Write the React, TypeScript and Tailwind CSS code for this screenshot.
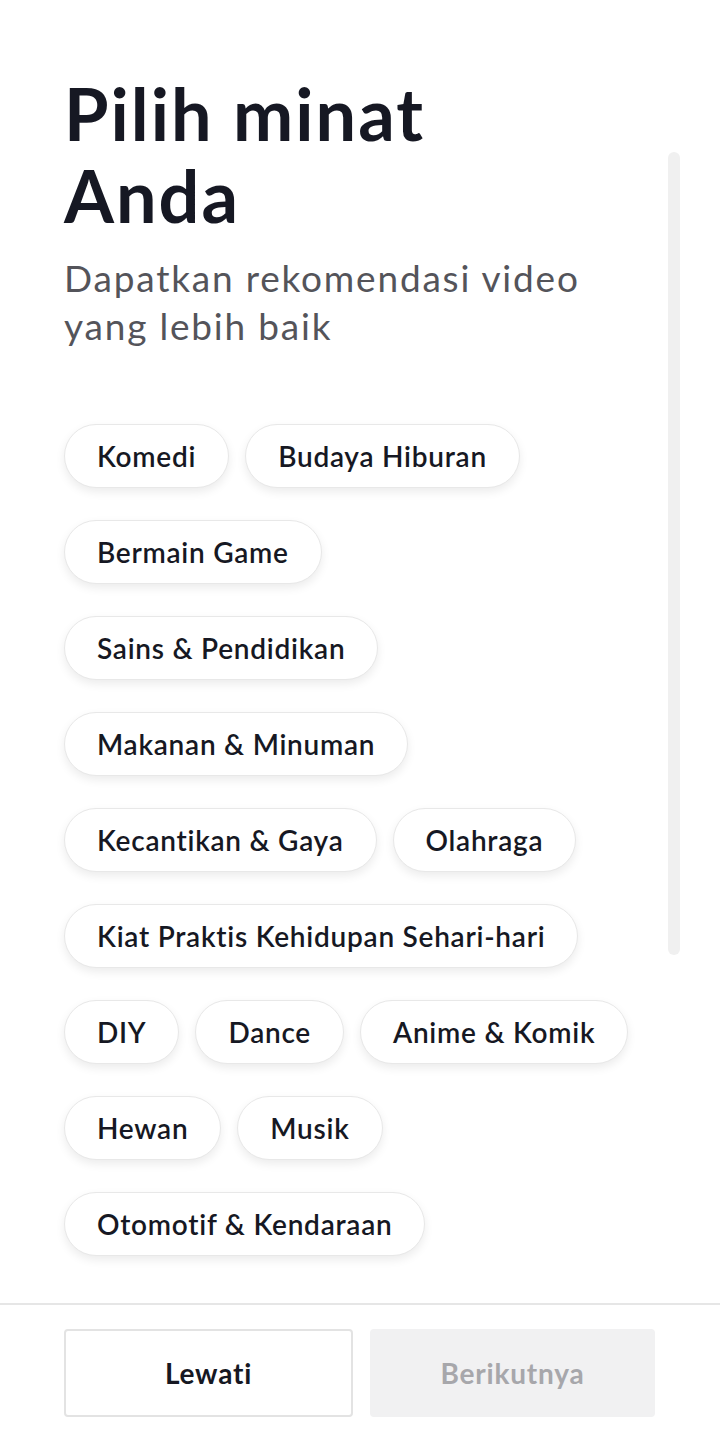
const INTERESTS: string[][] = [
  ['Komedi', 'Budaya Hiburan'],
  ['Bermain Game'],
  ['Sains & Pendidikan'],
  ['Makanan & Minuman'],
  ['Kecantikan & Gaya', 'Olahraga'],
  ['Kiat Praktis Kehidupan Sehari-hari'],
  ['DIY', 'Dance', 'Anime & Komik'],
  ['Hewan', 'Musik'],
  ['Otomotif & Kendaraan'],
];

export default function App() {
  return (
    <div className="relative flex h-[1440px] w-[720px] flex-col bg-white text-[#161823]" style={{ fontFamily: 'Lato, "Noto Sans", sans-serif' }}>
      <div className="flex-1 px-16 pt-[72px]">
        <h1 className="text-[72px] font-bold leading-[82px] tracking-[2px]">
          Pilih minat
          <br />
          Anda
        </h1>
        <p className="mt-[18px] text-[37px] leading-[48px] tracking-[1.8px] text-[#54545a]">
          Dapatkan rekomendasi video
          <br />
          yang lebih baik
        </p>

        <div className="mt-[74px] flex flex-col gap-8">
          {INTERESTS.map((row, i) => (
            <div key={i} className="flex gap-4">
              {row.map((label) => (
                <button
                  key={label}
                  className="h-16 rounded-full border border-[#e8e8e8] bg-white px-8 text-[28px] font-semibold tracking-[0.75px] text-[#161823] shadow-[0_4px_10px_rgba(0,0,0,0.08)]"
                >
                  {label}
                </button>
              ))}
            </div>
          ))}
        </div>
      </div>

      {/* scrollbar */}
      <div className="absolute left-[668px] top-[152px] h-[803px] w-3 rounded-full bg-[#f0f0f0]" />

      <div className="flex h-[137px] gap-[17px] border-t-2 border-[#e6e6e6] pl-16 pr-[65px] pt-6">
        <button className="h-[88px] flex-1 rounded border-2 border-[#e3e3e3] bg-white text-[28px] font-bold tracking-[0.8px] text-[#161823]">
          Lewati
        </button>
        <button className="h-[88px] flex-1 rounded bg-[#f1f1f2] text-[28px] font-bold tracking-[0.8px] text-[#a7a7ab]">
          Berikutnya
        </button>
      </div>
    </div>
  );
}
